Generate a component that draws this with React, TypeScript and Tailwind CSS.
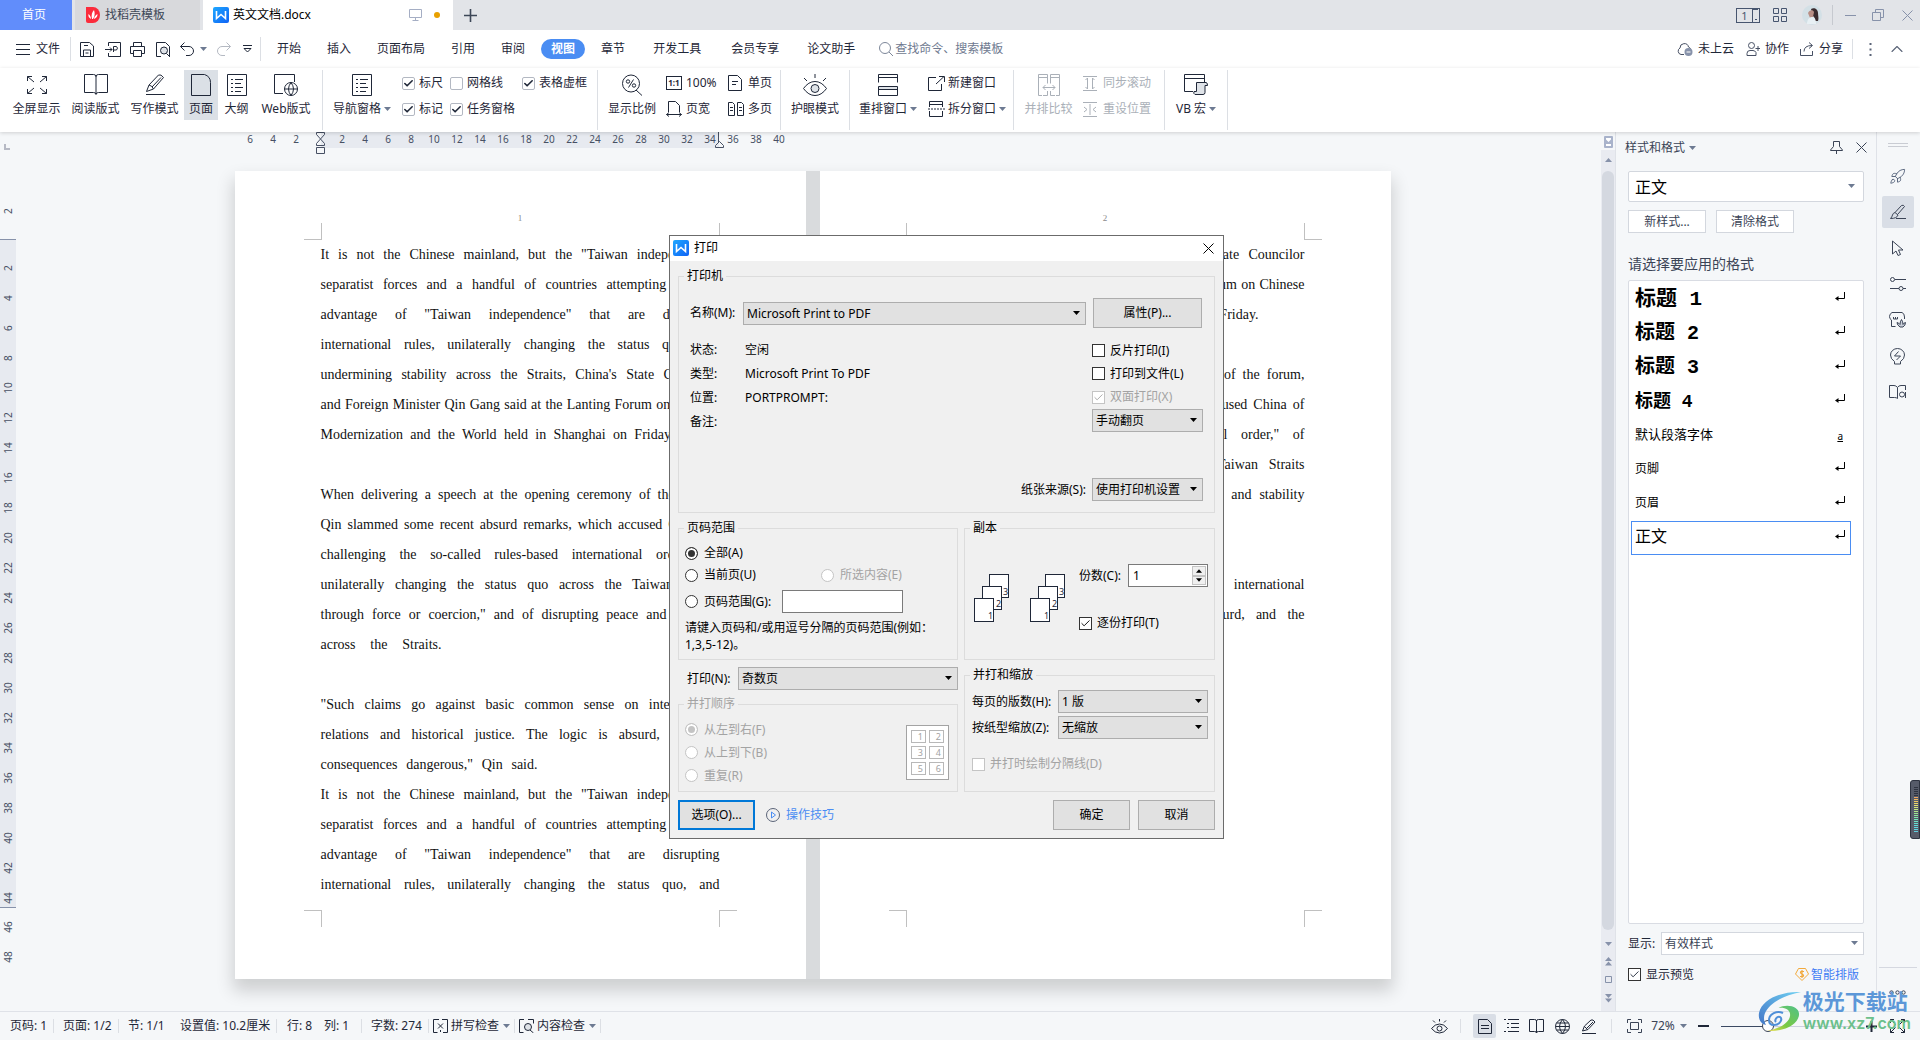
import type { ReactNode } from "react";
import { Check, ChevronUp, Rocket } from "lucide-react";
import clsx from "clsx";

const paragraphLines = [
  { text: 'It is not the Chinese mainland, but the "Taiwan independence"' },
  { text: "separatist forces and a handful of countries attempting to take" },
  { text: 'advantage of "Taiwan independence" that are disrupting' },
  { text: "international rules, unilaterally changing the status quo, and" },
];

const speechLines = [
  { text: "undermining stability across the Straits, China's State Councilor" },
  { text: "and Foreign Minister Qin Gang said at the Lanting Forum on Chinese" },
  { text: "Modernization and the World held in Shanghai on Friday.", width: "w-[353px]" },
  { text: "" },
  { text: "When delivering a speech at the opening ceremony of the forum," },
  { text: "Qin slammed some recent absurd remarks, which accused China of" },
  { text: 'challenging the so-called rules-based international order," of' },
  { text: "unilaterally changing the status quo across the Taiwan Straits" },
  { text: 'through force or coercion," and of disrupting peace and stability' },
  { text: "across the Straits.", width: "w-[121px]" },
  { text: "" },
  { text: '"Such claims go against basic common sense on international' },
  { text: "relations and historical justice. The logic is absurd, and the" },
  { text: 'consequences dangerous," Qin said.', width: "w-[217px]" },
];

const pages = [
  { number: 1, lines: [...paragraphLines, ...speechLines, ...paragraphLines] },
  { number: 2, lines: speechLines },
];

const menuTabs = [
  { label: "开始", className: "px-[10px]" },
  { label: "插入", className: "px-[10px]" },
  { label: "页面布局", className: "px-[10px]" },
  { label: "引用", className: "px-[10px]" },
  { label: "审阅", className: "px-[10px]" },
  { label: "视图", className: "px-[10px] rounded-full bg-[#4a8df3] font-bold text-white" },
  { label: "章节", className: "px-[10px]" },
  { label: "开发工具", className: "px-3" },
  { label: "会员专享", className: "px-3" },
  { label: "论文助手", className: "px-[10px]" },
];

const styleItems = [
  { name: "标题 1", className: "text-[21px] font-bold" },
  { name: "标题 2", className: "text-[20px] font-bold" },
  { name: "标题 3", className: "text-[20px] font-bold" },
  { name: "标题 4", className: "text-[18px] font-bold" },
  { name: "默认段落字体", className: "text-[13px]", character: true },
  { name: "页脚", className: "text-xs" },
  { name: "页眉", className: "text-xs" },
  { name: "正文", className: "text-base", selected: true },
];

const statusItems = [
  { label: "页码: 1", className: "w-[43px]", sep: true },
  { label: "页面: 1/2", className: "ml-[9px] w-[55px]", sep: true },
  { label: "节: 1/1", className: "ml-[9px] w-[52px]" },
  { label: "设置值: 10.2厘米", className: "w-[96px]", sep: true },
  { label: "行: 8", className: "ml-[10px] w-[37px]" },
  { label: "列: 1", className: "w-[37px]", sep: true },
  { label: "字数: 274", className: "ml-[9px] w-[57px]", sep: true },
];

const evens = (from: number, to: number) =>
  Array.from({ length: (to - from) / 2 + 1 }, (_, i) => from + i * 2);

type IconProps = { w: number; h: number; d?: string; className?: string; children?: ReactNode };

const Icon = ({ w, h, d, className, children }: IconProps) => (
  <svg
    width={w}
    height={h}
    viewBox={`0 0 ${w} ${h}`}
    fill="none"
    stroke="currentColor"
    aria-hidden="true"
    className={clsx("shrink-0", className)}
  >
    {d && <path d={d} />}
    {children}
  </svg>
);

const Caret = ({ className = "text-[#6d7a92]" }: { className?: string }) => (
  <svg width="7" height="4" viewBox="0 0 7 4" className={clsx("shrink-0", className)} aria-hidden="true">
    <path d="M0 0h7L3.500 4z" fill="currentColor" />
  </svg>
);

const Sep = ({ className }: { className?: string }) => (
  <span className={clsx("w-px shrink-0 bg-[#dcdfe4]", className)} />
);

const WpsLogo = () => (
  <svg width="16" height="16" viewBox="0 0 16 16" className="shrink-0" aria-hidden="true">
    <defs>
      <linearGradient id="wps" x1="0" y1="0" x2="1" y2="1">
        <stop offset="0" stopColor="#1fa8ff" />
        <stop offset="1" stopColor="#0f62f5" />
      </linearGradient>
    </defs>
    <rect width="16" height="16" rx="2" fill="url(#wps)" />
    <path d="M3.500 4v7.500L8 7.500l4.500 4V4" fill="none" stroke="#fff" strokeWidth="1.600" />
  </svg>
);

type CheckboxProps = {
  label: string;
  checked?: boolean;
  disabled?: boolean;
  soft?: boolean;
  gap?: string;
};

const Checkbox = ({ label, checked, disabled, soft, gap = "gap-[5px]" }: CheckboxProps) => (
  <label className={clsx("flex items-center whitespace-nowrap", gap, disabled && "text-[#a3a3a3]")}>
    <span className="grid size-[13px] shrink-0 place-items-center">
      <input
        type="checkbox"
        defaultChecked={checked}
        disabled={disabled}
        className={clsx(
          "size-[13px] appearance-none border bg-white [grid-area:1/1]",
          soft ? "rounded-[2px] border-[#b3b8c2]" : disabled ? "border-[#c4c4c4]" : "border-[#333]",
        )}
      />
      {checked && (
        <Check size={11} strokeWidth={soft ? 3.5 : 2} className="pointer-events-none [grid-area:1/1]" />
      )}
    </span>
    {label}
  </label>
);

type RadioProps = { name: string; label: string; checked?: boolean; disabled?: boolean };

const Radio = ({ name, label, checked, disabled }: RadioProps) => (
  <label className={clsx("flex items-center gap-[6px] whitespace-nowrap", disabled && "text-[#a3a3a3]")}>
    <input
      type="radio"
      name={name}
      defaultChecked={checked}
      disabled={disabled}
      className="size-[13px] shrink-0 appearance-none rounded-full border border-[#333] bg-white checked:bg-[#333] checked:shadow-[inset_0_0_0_2px_#fff] disabled:border-[#c4c4c4] disabled:checked:bg-[#c4c4c4]"
    />
    {label}
  </label>
);

type SelectProps = { id: string; value: string; className: string; label?: string };

const Select = ({ id, value, className, label }: SelectProps) => (
  <span className={clsx("relative flex h-[23px] shrink-0", className)}>
    <select
      id={id}
      aria-label={label}
      className="w-full appearance-none border border-[#adadad] bg-[#e1e1e1] pl-[3px] leading-[21px] text-black"
    >
      <option>{value}</option>
    </select>
    <Caret className="pointer-events-none absolute top-[9px] right-[6px] text-black" />
  </span>
);

const DialogButton = ({ label, className }: { label: string; className: string }) => (
  <button className={clsx("h-[30px] shrink-0 bg-[#e1e1e1]", className)}>{label}</button>
);

type FieldsetProps = {
  legend: string;
  className?: string;
  bodyClassName?: string;
  disabled?: boolean;
  children: ReactNode;
};

const Fieldset = ({ legend, className, bodyClassName, disabled, children }: FieldsetProps) => (
  <fieldset className={clsx("border border-[#dcdcdc]", className)}>
    <legend className={clsx("ml-[5px] px-[3px] leading-4", disabled && "text-[#a3a3a3]")}>{legend}</legend>
    <div className={bodyClassName}>{children}</div>
  </fieldset>
);

/* ---------- title bar ---------- */

const TitleBar = () => (
  <header className="flex h-[30px] items-stretch bg-[#e2e4e8] text-[#3d4757]">
    <button className="w-[72px] bg-[#618dfb] pr-1 text-white">首页</button>
    <button className="ml-[3px] flex w-[125px] items-center gap-[5px] bg-[#d8d9dc] pl-[11px]">
      <svg width="14" height="16" viewBox="0 0 14 16" aria-hidden="true">
        <path d="M0 0h7a7 8 0 0 1 0 16H2a2 2 0 0 1-2-2z" fill="#fb2c3c" />
        <path
          d="M6 12C5 8 6 5 8 3c1 3 1 6-1 9zM5 12C3 11 2 9 2.500 7 4 8 5 10 5 12zM8 12c0-2 1.500-4 3.500-5 0 3-1.500 4-3.500 5z"
          fill="#fff"
        />
      </svg>
      找稻壳模板
    </button>
    <div className="ml-[3px] flex w-[250px] items-center bg-white pl-[10px] text-black">
      <WpsLogo />
      <span className="ml-1 flex-1">英文文档.docx</span>
      <Icon w={13} h={12} className="text-[#a5aec4]" d="M.5.5h12v8H.5zM6.500 8.500v3M3.500 11.500h6" />
      <span className="mr-[13px] ml-[12px] size-[6px] rounded-full bg-[#e8a000]" />
    </div>
    <button className="ml-[11px]" aria-label="新建标签">
      <Icon w={13} h={13}>
        <path d="M6.500 0v13M0 6.500h13" strokeWidth="1.600" />
      </Icon>
    </button>
    <div className="ml-auto flex items-center pr-[7px] text-[#47556f]">
      <span className="flex h-[15px] w-6 border border-current">
        <span className="flex-1 text-center text-[11px] leading-[13px]">1</span>
        <Icon w={7} h={13} d="M.5 0v13M.5.5H6M3 10.500h2" />
      </span>
      <Icon
        w={14}
        h={14}
        className="ml-[13px]"
        d="M.5.5h5v5h-5zM8.500.5h5v5h-5zM.5 8.500h5v5h-5zM8.500 8.500h5v5h-5z"
      />
      <svg width="20" height="20" viewBox="0 0 20 20" className="ml-[15px]" aria-hidden="true">
        <circle cx="10" cy="10" r="10" fill="#d3e0e6" />
        <path d="M9 4c3-2 7 0 7 4 0 3 1 5 0 8h-3c0-3-1-4-2-5z" fill="#3a2b2e" />
        <path d="M6 8c1-3 5-4 6-1l-1 5-3 1z" fill="#b98f86" />
        <path d="M5 19c0-4 2-7 5-7s4 3 4 7z" fill="#e8f0f4" />
      </svg>
      <Sep className="ml-[10px] h-5 !bg-[#c6c9cf]" />
      <button aria-label="最小化" className="ml-[12px] text-[#8792aa]">
        <Icon w={11} h={12} d="M0 6.500h11" />
      </button>
      <button aria-label="还原" className="ml-[16px] text-[#8792aa]">
        <Icon w={12} h={12} d="M.5 3.500h8v8h-8zM3.500 3V.5h8v8H9" />
      </button>
      <button aria-label="关闭" className="ml-[18px] text-[#8792aa]">
        <Icon w={11} h={11} d="M.5.5l10 10M10.500.5l-10 10" />
      </button>
    </div>
  </header>
);

/* ---------- menu row ---------- */

const MenuRow = () => (
  <nav className="flex h-[38px] items-center bg-white text-[#1f2738]">
    <button className="ml-4 flex items-center gap-[6px]">
      <Icon w={14} h={11} d="M0 .5h14M0 5.500h14M0 10.500h14" />
      文件
    </button>
    <Sep className="ml-[10px] h-6" />
    <button aria-label="保存" className="ml-[9px]">
      <Icon w={15} h={15} d="M.5 14.500V.5h9l4 3.500v10.500zM3.500 14v-6h7v6M4 3.500h4M5.500 11h3" />
    </button>
    <button aria-label="输出为PDF" className="ml-[10px]">
      <Icon w={16} h={15} d="M3.500 4V.5h12v14h-12V11M0 7.500h7M5 5.500l2 2-2 2M8.500 10V4.500h3q2 1.500 0 3.500H9" />
    </button>
    <button aria-label="打印" className="ml-[9px]">
      <Icon w={15} h={15} d="M3.500 4V.5h8V4M3 11.500H.5v-7h14v7H12M3.500 8.500h8v6h-8z" />
    </button>
    <button aria-label="打印预览" className="ml-[11px]">
      <Icon w={15} h={15} d="M5 14.500H.5V.5h9l4 4V14">
        <circle cx="8" cy="8.500" r="3.500" fill="#dfe3e8" />
        <path d="M10.500 11.500l3.500 3.500" />
      </Icon>
    </button>
    <button aria-label="撤销" className="ml-[9px] flex items-center gap-[6px]">
      <Icon w={14} h={14} d="M4.500.5l-4 4 4 4M.5 4.500H9a4.500 4.500 0 0 1 0 9H6" />
      <Caret />
    </button>
    <button aria-label="恢复" className="ml-[10px] text-[#b4b9c2]">
      <Icon w={14} h={14} d="M9.500.5l4 4-4 4M13.500 4.500H5a4.500 4.500 0 0 0 0 9h3" />
    </button>
    <button aria-label="自定义快速访问工具栏" className="ml-[12px]">
      <Icon w={9} h={8} d="M0 .5h9M1 3.500h7l-3.500 3.500z" />
    </button>
    <Sep className="ml-[8px] h-6" />
    <div className="ml-[6px] flex gap-[6px]">
      {menuTabs.map((tab) => (
        <button key={tab.label} className={clsx("h-5 whitespace-nowrap", tab.className)}>
          {tab.label}
        </button>
      ))}
    </div>
    <label className="ml-[14px] flex items-center gap-[1px] text-[#7d8799]">
      <Icon w={15} h={14}>
        <circle cx="6" cy="6" r="5.500" />
        <path d="M10 10l4 4" />
      </Icon>
      <input
        aria-label="查找命令"
        placeholder="查找命令、搜索模板"
        className="w-[130px] placeholder:text-[#6f7a90]"
      />
    </label>
    <div className="ml-auto flex items-center pr-[13px] whitespace-nowrap">
      <button className="flex items-center gap-[5px]">
        <Icon
          w={16}
          h={14}
          d="M7 12.500H4A3.500 3.500 0 0 1 3 6a4.300 4.300 0 0 1 8.500-1Q13 5.500 13.500 7"
          className="text-[#475064]"
        >
          <circle cx="11.500" cy="10" r="4" fill="#8792aa" stroke="none" />
          <path d="M9.500 10h4" stroke="#fff" />
        </Icon>
        未上云
      </button>
      <button className="ml-[12px] flex items-center gap-[5px]">
        <Icon
          w={14}
          h={14}
          d="M1 13.500v-2q0-3 3-3h3q2 0 3 2v3zM9.500 6.500h5M12 4v5"
          className="text-[#475064]"
        >
          <circle cx="5.500" cy="3.500" r="3" />
        </Icon>
        协作
      </button>
      <button className="ml-[11px] flex items-center gap-[5px]">
        <Icon
          w={14}
          h={14}
          d="M.5 7v6.500h12V9M4 9.500q0-6 8-6M9 .5l3.500 3-3.500 3"
          className="text-[#475064]"
        />
        分享
      </button>
      <Sep className="ml-[9px] h-5" />
      <button aria-label="更多" className="ml-[16px]">
        <Icon w={3} h={13} className="text-[#5b6478]">
          <path d="M1.500 0v2M1.500 5.500v2M1.500 11v2" strokeWidth="2" />
        </Icon>
      </button>
      <button aria-label="折叠功能区" className="ml-[15px] text-[#5b6478]">
        <ChevronUp size={20} strokeWidth={1.3} />
      </button>
    </div>
  </nav>
);

/* ---------- ribbon ---------- */

type ToolProps = {
  icon: ReactNode;
  label: string;
  className?: string;
  caret?: boolean;
  disabled?: boolean;
};

const LargeTool = ({ icon, label, className, caret, disabled }: ToolProps) => (
  <button
    disabled={disabled}
    className={clsx("flex h-[50px] shrink-0 flex-col items-center disabled:text-[#aab0b8]", className)}
  >
    <span className="flex h-[30px] items-center">{icon}</span>
    <span className="flex items-center gap-[3px] leading-[18px] whitespace-nowrap">
      {label}
      {caret && <Caret />}
    </span>
  </button>
);

const SmallTool = ({ icon, label, caret, disabled }: ToolProps) => (
  <button
    disabled={disabled}
    className="flex h-[26px] items-center gap-[3px] whitespace-nowrap disabled:text-[#aab0b8]"
  >
    <span className="flex w-[17px] shrink-0">{icon}</span>
    {label}
    {caret && <Caret />}
  </button>
);

const outlineIcon = (
  <Icon
    w={20}
    h={22}
    d="M.5.500h19v21H.5zM4 5.500h2M8 5.500h8M4 9.500h2M8 9.500h6M4 13.500h2M8 13.500h8M4 17.500h2M8 17.500h6"
  />
);

const Ribbon = () => (
  <section className="relative z-10 flex h-16 items-start bg-white pt-[2px] pl-[7px] text-[#1f2738] shadow-[0_1px_4px_rgba(0,0,0,0.16)]">
    <LargeTool
      label="全屏显示"
      className="w-[59px]"
      icon={
        <Icon
          w={22}
          h={20}
          d="M8 7 1.500 1.500M1.500 6V1.500H6M14 7l6.500-5.500M16 1.500h4.500V6M8 13l-6.500 5.500M1.500 14v4.500H6M14 13l6.500 5.500M16 18.500h4.500V14"
        />
      }
    />
    <LargeTool
      label="阅读版式"
      className="w-[59px]"
      icon={
        <Icon
          w={24}
          h={22}
          d="M.5.500h9q2.500 0 2.500 2 0-2 2.500-2h9v18h-9q-2.500 0-2.500 2 0-2-2.500-2h-9zM12 2v18"
        />
      }
    />
    <LargeTool
      label="写作模式"
      className="w-[59px]"
      icon={
        <Icon
          w={22}
          h={22}
          d="M2 20.500h19M2.500 17.500 5 11 14.500 1q2.500-1 5 2.500L9.500 15zM5 11q3 .5 4.500 4M8 13 17 3.500"
        />
      }
    />
    <LargeTool
      label="页面"
      className="w-[34px] bg-[#dbe0e6]"
      icon={<Icon w={20} h={22} d="M.5.500h13q6 2 6 8v13H.5z" />}
    />
    <LargeTool label="大纲" className="w-[37px]" icon={outlineIcon} />
    <LargeTool
      label="Web版式"
      className="w-[62px]"
      icon={
        <Icon w={24} h={22} d="M9 19.500H.5v-19h20V8">
          <circle cx="17" cy="15" r="6.500" />
          <path d="M10.500 15h13M17 8.500q-5 6.500 0 13 5-6.500 0-13" />
        </Icon>
      }
    />
    <Sep className="ml-[5px] h-[60px]" />
    <LargeTool label="导航窗格" caret className="ml-2 w-[62px]" icon={outlineIcon} />
    <div className="ml-[9px] grid shrink-0 auto-rows-[26px] grid-cols-[48px_72px_75px]">
      <Checkbox soft gap="gap-1" label="标尺" checked />
      <Checkbox soft gap="gap-1" label="网格线" />
      <Checkbox soft gap="gap-1" label="表格虚框" checked />
      <Checkbox soft gap="gap-1" label="标记" checked />
      <Checkbox soft gap="gap-1" label="任务窗格" checked />
    </div>
    <Sep className="h-[60px]" />
    <LargeTool
      label="显示比例"
      className="w-[68px]"
      icon={
        <Icon w={22} h={22} d="M15 16l6 5.500M12.500 5.500l-5 8">
          <circle cx="10" cy="9.500" r="8.500" />
          <circle cx="7" cy="7.500" r="1.700" />
          <circle cx="13" cy="11.500" r="1.700" />
        </Icon>
      }
    />
    <div className="grid shrink-0 grid-cols-[62px_52px] grid-rows-2">
      <SmallTool
        label="100%"
        icon={
          <span className="h-[14px] w-4 border border-current text-center text-[8px] leading-3 font-bold">
            1:1
          </span>
        }
      />
      <SmallTool label="单页" icon={<Icon w={14} h={16} d="M.5.500h9l4 4v11H.5zM4 6.500h6M4 9.500h4" />} />
      <SmallTool
        label="页宽"
        icon={
          <Icon
            w={16}
            h={16}
            d="M2.500 11V.5h7l4 4V11M.5 13.500h15M3 11.500l-2.500 2 2.500 2M13 11.500l2.500 2-2.500 2"
          />
        }
      />
      <SmallTool
        label="多页"
        icon={
          <Icon
            w={16}
            h={16}
            d="M.5 1.500h4l2 2v11h-6zM9.500 1.500h4l2 2v11h-6zM2 6.500h3M2 9.500h3M11 6.500h3M11 9.500h3"
          />
        }
      />
    </div>
    <Sep className="h-[60px]" />
    <LargeTool
      label="护眼模式"
      className="w-[68px]"
      icon={
        <Icon w={24} h={22} d="M.5 14.500q5-7 11.500-7t11.500 7q-5 7-11.500 7t-11.500-7M12 0v4M1 4l3 3M23 4l-3 3">
          <circle cx="12" cy="14.500" r="4" fill="#dfe3e8" />
        </Icon>
      }
    />
    <Sep className="h-[60px]" />
    <LargeTool
      label="重排窗口"
      caret
      className="w-[76px]"
      icon={
        <Icon w={20} h={22}>
          <path d="M.5 12.500h19v3H.5z" fill="#dfe3e8" stroke="none" />
          <path d="M.5 8.500v-8h19v8M0 3.500h20M.5 12.500h19v9H.5zM0 15.500h20" />
        </Icon>
      }
    />
    <div className="ml-[2px] flex w-[86px] shrink-0 flex-col">
      <SmallTool
        label="新建窗口"
        icon={<Icon w={17} h={15} d="M8 1.500H.5v13h13V8M8 8l8-7.500M11 .5h5.500V6" />}
      />
      <SmallTool
        label="拆分窗口"
        caret
        icon={
          <Icon w={17} h={16} d="M1.500 6V.5h13V6M1 3.500h14M1.500 10v5.500h13V10">
            <path d="M0 8h17" strokeDasharray="2 1" />
          </Icon>
        }
      />
    </div>
    <Sep className="-ml-px h-[60px]" />
    <LargeTool
      label="并排比较"
      disabled
      className="w-[69px]"
      icon={
        <Icon
          w={22}
          h={22}
          d="M4 21.500H.5V.5h9v9M18 21.500h3.500V.5h-9v9M.5 3.500h9M12.500 3.500h9M9.500 17v4.500H5M12.500 17v4.500H17M5 13.500h12M7.500 11 5 13.500 7.500 16M14.500 11l2.500 2.500-2.500 2.500"
        />
      }
    />
    <div className="flex w-[81px] shrink-0 flex-col">
      <SmallTool
        label="同步滚动"
        disabled
        icon={
          <Icon
            w={14}
            h={15}
            d="M0 .5h14M0 14.500h14M4.500 2v11M9.500 2v11M2.500 4l2-2M2.500 11l2 2M11.500 4l-2-2M11.500 11l-2 2"
          />
        }
      />
      <SmallTool
        label="重设位置"
        disabled
        icon={<Icon w={14} h={15} d="M0 .5h14M0 14.500h14M7 2v11M1 5l3 2.500L1 10M13 5l-3 2.500L13 10" />}
      />
    </div>
    <Sep className="h-[60px]" />
    <LargeTool
      label="VB 宏"
      caret
      className="w-[62px]"
      icon={
        <Icon w={24} h={22} d="M9 17.500H.5V.5h20V8M.5 4.500h20">
          <path d="M12.500 8.500H22q1.500 0 1.500 3H21v7q0 2-2 2h-8q-2-1-1-3h2.500z" fill="#dfe3e8" />
        </Icon>
      }
    />
    <Sep className="h-[60px]" />
  </section>
);

/* ---------- document ---------- */

const HorizontalRuler = () => {
  const cell = "w-[23px] shrink-0 text-center";
  return (
    <div className="relative flex h-4 text-[10px] leading-[14px] text-[#475064]">
      <div className="flex w-[86px] pl-1">
        {[6, 4, 2].map((n) => (
          <span key={n} className={cell}>{n}</span>
        ))}
      </div>
      <div className="flex w-[398px] bg-[#e7eaf0] pl-[10px]">
        {evens(2, 34).map((n) => (
          <span key={n} className={cell}>{n}</span>
        ))}
      </div>
      <div className="flex pl-[3px]">
        {evens(36, 40).map((n) => (
          <span key={n} className={cell}>{n}</span>
        ))}
      </div>
      <Icon
        w={9}
        h={22}
        className="absolute top-0 left-[81px]"
        d="M.5.5h8v2L4.500 7l-4-4.500zM4.500 7l4 4.500v2h-8v-2zM.5 15.500h8v6h-8z"
      />
      <Icon w={9} h={16} className="absolute top-0 left-[480px]" d="M3.500 0v10M4.500 9.500l4 4v2h-8v-2z" />
    </div>
  );
};

const VerticalRuler = () => {
  const cell = "flex h-[30px] shrink-0 -rotate-90 items-center justify-center";
  return (
    <div className="w-4 shrink-0 text-[10px] text-[#475064]">
      <Icon w={16} h={64} className="text-[#b6b9c4]">
        <path d="M5 12v5h5" strokeWidth="2" />
      </Icon>
      <div className={cell}>2</div>
      <div className="mt-[13px] h-[669px] border-y border-[#8792aa] bg-[#e7eaf0] pt-[13px]">
        {evens(2, 44).map((n) => (
          <div key={n} className={cell}>{n}</div>
        ))}
      </div>
      <div className="pt-1">
        <div className={cell}>46</div>
        <div className={cell}>48</div>
      </div>
    </div>
  );
};

type Line = { text: string; width?: string };

const Page = ({ number, lines }: { number: number; lines: Line[] }) => (
  <article className="w-[571px] bg-white font-['Liberation_Serif',serif] text-sm text-[#111]">
    <div className="flex h-[52px] items-end justify-center text-[9px] leading-none text-[#8a8a8a]">
      {number}
    </div>
    <div className="flex h-[17px] justify-between px-[69px]">
      <span className="w-[18px] border-r border-b border-[#c0c0c0]" />
      <span className="w-[18px] border-b border-l border-[#c0c0c0]" />
    </div>
    <div className="min-h-[670px] px-[86px]">
      {lines.map((line, index) => (
        <p
          key={index}
          className={clsx("h-[30px] leading-[30px] whitespace-nowrap [text-align-last:justify]", line.width)}
        >
          {line.text}
        </p>
      ))}
    </div>
    <div className="flex h-[17px] justify-between px-[69px]">
      <span className="w-[18px] border-t border-r border-[#c0c0c0]" />
      <span className="w-[18px] border-t border-l border-[#c0c0c0]" />
    </div>
    <div className="h-[52px]" />
  </article>
);

const ScrollColumn = () => (
  <div className="flex w-[14px] shrink-0 flex-col items-center bg-[#e9ebf1] text-[#8792aa]">
    <div className="flex h-[18px] w-full items-end justify-center bg-[#f5f7f9]">
      <svg width="9" height="14" viewBox="0 0 9 14" aria-hidden="true">
        <rect width="9" height="12" rx="1" fill="#a9b3cb" />
        <path d="M2 2h5v1.500L4.500 6 2 3.500zM2 10V8h5v2z" fill="#fff" />
      </svg>
    </div>
    <Caret className="mt-2 rotate-180 text-[#8792aa]" />
    <div className="mt-[9px] w-3 flex-1 rounded-full bg-[#d4d8e0]" />
    <Caret className="mt-3 text-[#8792aa]" />
    <Icon w={7} h={9} className="mt-[11px]">
      <path d="M0 4 3.500 0 7 4zM0 8.500l3.500-4 3.500 4z" fill="currentColor" stroke="none" />
    </Icon>
    <Icon w={7} h={7} className="mt-[10px]" d="M.5.5h6v6h-6z" />
    <Icon w={7} h={9} className="mt-[11px] mb-2">
      <path d="M0 0h7L3.500 4zM0 4.500h7l-3.500 4z" fill="currentColor" stroke="none" />
    </Icon>
  </div>
);

/* ---------- style pane ---------- */

const StylePane = () => (
  <aside className="flex w-[261px] shrink-0 flex-col border-l border-[#dfe2e8] pr-[12px] pb-[30px] pl-3 text-[#3b4456]">
    <div className="-mx-[3px] flex h-[31px] items-center">
      <button className="flex items-center gap-1">
        样式和格式 <Caret />
      </button>
      <button aria-label="固定" className="ml-auto">
        <Icon w={13} h={13} d="M3.500.5h6v5l3 3.500v.5H.5V9l3-3.500zM6.500 9.500V13" />
      </button>
      <button aria-label="关闭窗格" className="ml-[13px]">
        <Icon w={11} h={11} d="M.5.5l10 10M10.500.5l-10 10" />
      </button>
    </div>
    <span className="relative mt-2 flex h-[31px]">
      <select
        aria-label="当前样式"
        className="w-full appearance-none rounded-[2px] border border-[#d3d7de] bg-white pl-[6px] text-base text-black"
      >
        <option>正文</option>
      </select>
      <Caret className="pointer-events-none absolute top-[13px] right-[9px] text-[#6d7a92]" />
    </span>
    <div className="mt-2 flex gap-[10px]">
      <button className="h-[23px] w-[78px] border border-[#d3d7de] bg-white">新样式...</button>
      <button className="h-[23px] w-[78px] border border-[#d3d7de] bg-white">清除格式</button>
    </div>
    <h2 className="mt-[21px] text-sm leading-5">请选择要应用的格式</h2>
    <ul className="mt-[6px] flex-1 rounded-[2px] border border-[#d9dce3] bg-white pt-[2px] font-['Liberation_Mono','Noto_Sans_CJK_SC',monospace] text-black">
      {styleItems.map((item) => (
        <li
          key={item.name}
          className={clsx(
            "mr-3 ml-[2px] flex h-[34px] items-center justify-between border pr-[5px] pl-[3px]",
            item.selected ? "border-[#4a8df3]" : "border-transparent",
          )}
        >
          <span className={clsx("leading-8", item.className)}>{item.name}</span>
          {item.character ? (
            <span className="pr-[2px] font-['Noto_Sans',sans-serif] text-[10px] underline">a</span>
          ) : (
            <Icon w={10} h={9} className="mb-[7px]" d="M9.500 0v6.500H1">
              <path d="M0 6.500 3.500 4v5z" fill="currentColor" stroke="none" />
            </Icon>
          )}
        </li>
      ))}
    </ul>
    <div className="mt-2 flex items-center">
      <label htmlFor="style-filter" className="w-[33px] text-[#1f2738]">显示:</label>
      <span className="relative flex h-[23px] flex-1">
        <select
          id="style-filter"
          className="w-full appearance-none border border-[#d3d7de] bg-white pl-[3px]"
        >
          <option>有效样式</option>
        </select>
        <Caret className="pointer-events-none absolute top-[9px] right-[6px] text-[#6d7a92]" />
      </span>
    </div>
    <div className="mt-[13px] flex h-[13px] items-center justify-between pr-[5px] text-[#1f2738]">
      <Checkbox label="显示预览" checked />
      <a href="#layout" className="flex items-center gap-[2px] text-[#3f7cf4]">
        <Icon w={14} h={13} d="M3.500.5h7l3 5.500L7 12.500.5 6z" className="text-[#f2a93b]">
          <path d="M9 3.500H6q-1.500 1.500 1 2.500t1 2.500H5M7 2v8" strokeWidth="1.200" />
        </Icon>
        智能排版
      </a>
    </div>
  </aside>
);

const ToolStrip = () => (
  <aside className="flex w-[44px] shrink-0 flex-col items-center border-l border-[#dfe2e8] pr-[2px] text-[#3b4456]">
    <span className="mt-[11px] h-1 w-5 border-y border-[#c9ccd3]" />
    <button aria-label="推荐" className="mt-[13px] flex h-8 w-8 items-center justify-center">
      <Rocket size={17} strokeWidth={1.4} className="text-[#5b6880]" />
    </button>
    <button
      aria-label="样式"
      className="mt-1 flex h-8 w-8 items-center justify-center rounded-[2px] bg-[#d9dee6]"
    >
      <Icon
        w={16}
        h={16}
        d="M6 14.500h10M5 8.500 11.500 1.500q2-1 3 1L8 10M5 8.500l3 2.500q-1 3.500-7.500 3.500Q2 13 2.500 11T5 8.500"
      />
    </button>
    <button aria-label="选择" className="mt-1 flex h-8 w-8 items-center justify-center">
      <Icon w={13} h={17} d="M1.500 1v13l3.500-3 2 4.500 2.500-1-2-4.500H12z" />
    </button>
    <button aria-label="属性" className="mt-1 flex h-8 w-8 items-center justify-center">
      <Icon w={16} h={14} d="M5 2.500h11M0 11.500h9M13 11.500h3">
        <circle cx="2.500" cy="2.500" r="2" />
        <circle cx="11" cy="11.500" r="2" />
      </Icon>
    </button>
    <button aria-label="素材" className="mt-1 flex h-8 w-8 items-center justify-center">
      <Icon w={17} h={16} d="M6.500 14.500h-4V8Q.5 7 .5 4.500T3 .5h10Q15.500 1.500 15.500 5v2M4.500 5v2h2V5M6.500 7h2V5">
        <path
          d="M11 15q-3-2-3-4.500 2 .5 3 2 0-3 1.500-5 1.500 2 1.500 5 .5-1.500 2.500-2 0 3-2.500 4.500z"
          fill="#c9cfda"
        />
      </Icon>
    </button>
    <button aria-label="助手" className="mt-1 flex h-8 w-8 items-center justify-center">
      <Icon w={15} h={17} d="M4.500 13.500Q.5 11 .5 7a7 6.500 0 0 1 14 0q0 4-4 6.500V16h-6zM8.500 3.500l-4 4.500h6l-4 4" />
    </button>
    <button aria-label="查找" className="mt-1 flex h-8 w-8 items-center justify-center">
      <Icon w={17} h={14} d="M8.500 2.500Q7 .5 5 .5H.5v12h5q2 0 3 1zM8.500 2.500Q9.500.5 12 .5h4.500V5M16.500 7v6">
        <circle cx="13" cy="9.500" r="2.500" />
      </Icon>
    </button>
    <span className="mt-auto h-px w-[38px] bg-[#d5d8e0]" />
    <button aria-label="更多工具" className="mt-[22px] mb-4">
      <Icon w={17} h={5}>
        <circle cx="2.500" cy="2.500" r="1.700" />
        <circle cx="8.500" cy="2.500" r="1.700" />
        <circle cx="14.500" cy="2.500" r="1.700" />
      </Icon>
    </button>
  </aside>
);

/* ---------- print dialog ---------- */

const CopiesIcon = () => (
  <Icon w={37} h={49} className="text-[#1f2738]">
    {[
      { n: 3, x: 15, y: 0 },
      { n: 2, x: 8, y: 12 },
      { n: 1, x: 0, y: 24 },
    ].map((sheet) => (
      <g key={sheet.n}>
        <rect x={sheet.x + 0.5} y={sheet.y + 0.5} width="19" height="23" fill="#fff" />
        <text x={sheet.x + 14} y={sheet.y + 21} fontSize="9" fill="currentColor" stroke="none">
          {sheet.n}
        </text>
      </g>
    ))}
  </Icon>
);

const PrintDialog = () => (
  <div
    role="dialog"
    aria-label="打印"
    className="absolute top-[103px] left-[669px] z-20 w-[555px] border border-[#6b6b6b] bg-[#f0f0f0] text-black"
  >
    <div className="flex h-[25px] items-center bg-white pr-[9px] pb-px pl-[3px]">
      <WpsLogo />
      <span className="ml-[5px]">打印</span>
      <button aria-label="关闭" className="ml-auto">
        <Icon w={11} h={11} d="M.5.5l10 10M10.500.5l-10 10" />
      </button>
    </div>
    <div className="px-2 pt-[7px] pb-2">
      <Fieldset legend="打印机" bodyClassName="pr-[11px] pb-[11px]">
        <div className="flex items-center pt-[14px] pl-[11px]">
          <label htmlFor="printer" className="w-[53px]">名称(M):</label>
          <Select id="printer" value="Microsoft Print to PDF" className="w-[343px]" />
          <DialogButton label="属性(P)..." className="ml-[7px] w-[109px] border border-[#adadad]" />
        </div>
        <div className="mt-[10px] flex justify-between pl-[11px]">
          <dl className="grid auto-rows-[24px] grid-cols-[55px_auto] leading-6">
            <dt>状态:</dt>
            <dd>空闲</dd>
            <dt>类型:</dt>
            <dd>Microsoft Print To PDF</dd>
            <dt>位置:</dt>
            <dd>PORTPROMPT:</dd>
            <dt>备注:</dt>
            <dd />
          </dl>
          <div className="grid w-[111px] grid-rows-[23px_23px_24px_23px] pt-px">
            <Checkbox label="反片打印(I)" />
            <Checkbox label="打印到文件(L)" />
            <Checkbox label="双面打印(X)" checked disabled />
            <Select id="duplex" label="翻页方式" value="手动翻页" className="w-[111px]" />
          </div>
        </div>
        <div className="mt-[44px] flex items-center justify-end gap-[6px]">
          <label htmlFor="paper-source">纸张来源(S):</label>
          <Select id="paper-source" value="使用打印机设置" className="w-[111px]" />
        </div>
      </Fieldset>

      <div className="mt-[7px] grid grid-cols-[280px_1fr] gap-x-[6px]">
        <div>
          <Fieldset legend="页码范围" bodyClassName="px-[6px] pt-[6px] pb-[6px]">
            <div className="flex h-[22px] items-center">
              <Radio name="range" label="全部(A)" checked />
            </div>
            <div className="grid h-[22px] grid-cols-[136px_auto] items-center justify-start">
              <Radio name="range" label="当前页(U)" />
              <Radio name="range" label="所选内容(E)" disabled />
            </div>
            <div className="mt-1 grid h-[23px] grid-cols-[97px_121px] items-center">
              <Radio name="range" label="页码范围(G):" />
              <input aria-label="页码范围" className="h-[23px] border border-[#7a7a7a] bg-white px-1" />
            </div>
            <p className="mt-[6px] leading-[17px]">
              请键入页码和/或用逗号分隔的页码范围(例如：
              <br />
              1,3,5-12)。
            </p>
          </Fieldset>
          <div className="mt-[7px] flex items-center pl-[9px]">
            <label htmlFor="print-what" className="w-[51px]">打印(N):</label>
            <Select id="print-what" value="奇数页" className="w-[220px]" />
          </div>
          <Fieldset
            legend="并打顺序"
            disabled
            className="mt-[6px]"
            bodyClassName="flex items-center justify-between pt-[6px] pr-2 pb-1 pl-[6px]"
          >
            <div className="grid auto-rows-[23px]">
              <Radio name="order" label="从左到右(F)" checked disabled />
              <Radio name="order" label="从上到下(B)" disabled />
              <Radio name="order" label="重复(R)" disabled />
            </div>
            <div className="grid h-[55px] w-[43px] grid-cols-2 grid-rows-3 gap-[3px] border border-[#a3a3a3] bg-white p-1 text-[9px] leading-[11px] text-[#a3a3a3]">
              {[1, 2, 3, 4, 5, 6].map((n) => (
                <span key={n} className="border border-[#b8b8b8] pr-[2px] text-right">{n}</span>
              ))}
            </div>
          </Fieldset>
        </div>

        <div>
          <Fieldset legend="副本" bodyClassName="flex pb-[27px] pl-[9px]">
            <div className="flex gap-[19px] pt-[38px]">
              <CopiesIcon />
              <CopiesIcon />
            </div>
            <div className="ml-3 pt-[28px]">
              <div className="flex items-center">
                <label htmlFor="copies" className="w-[49px]">份数(C):</label>
                <div className="flex h-[23px] w-20 border border-[#7a7a7a] bg-white p-px">
                  <input id="copies" defaultValue="1" className="w-0 flex-1 pl-[3px]" />
                  <div className="flex w-[14px] flex-col">
                    <button
                      aria-label="增加"
                      className="flex flex-1 items-center justify-center border border-[#c4c4c4] bg-[#f0f0f0]"
                    >
                      <Caret className="w-[6px] rotate-180 text-black" />
                    </button>
                    <button
                      aria-label="减少"
                      className="flex flex-1 items-center justify-center border border-[#c4c4c4] bg-[#f0f0f0]"
                    >
                      <Caret className="w-[6px] text-black" />
                    </button>
                  </div>
                </div>
              </div>
              <div className="mt-[27px] flex h-[18px] items-center">
                <Checkbox label="逐份打印(T)" checked />
              </div>
            </div>
          </Fieldset>
          <Fieldset legend="并打和缩放" className="mt-[7px]" bodyClassName="pt-[7px] pr-[6px] pb-[18px] pl-[7px]">
            <div className="grid auto-rows-[23px] grid-cols-[86px_150px] items-center gap-y-[3px]">
              <label htmlFor="per-sheet">每页的版数(H):</label>
              <Select id="per-sheet" value="1 版" className="w-[150px]" />
              <label htmlFor="scale">按纸型缩放(Z):</label>
              <Select id="scale" value="无缩放" className="w-[150px]" />
            </div>
            <div className="mt-4 flex h-[18px] items-center">
              <Checkbox label="并打时绘制分隔线(D)" disabled />
            </div>
          </Fieldset>
        </div>
      </div>

      <div className="mt-2 flex items-center">
        <DialogButton label="选项(O)..." className="w-[77px] border-2 border-[#0078d7]" />
        <a href="#tips" className="ml-[11px] flex items-center gap-[6px] text-[#4a8df3]">
          <Icon w={14} h={14}>
            <circle cx="7" cy="7" r="6.500" stroke="#5b6478" />
            <path d="M5.500 4v6l4-3z" />
          </Icon>
          操作技巧
        </a>
        <DialogButton label="确定" className="ml-auto w-[77px] border border-[#adadad]" />
        <DialogButton label="取消" className="ml-2 w-[77px] border border-[#adadad]" />
      </div>
    </div>
  </div>
);

/* ---------- status bar ---------- */

const StatusBar = () => (
  <footer className="flex h-[29px] items-center border-t border-[#dfe2e8] bg-[#f5f7f9] text-[#1f2738]">
    <div className="flex items-center pl-[10px] whitespace-nowrap">
      {statusItems.map((item) => (
        <span key={item.label} className="flex items-center">
          <span className={item.className}>{item.label}</span>
          {item.sep && <Sep className="h-[14px]" />}
        </span>
      ))}
      <button className="ml-1 flex items-center gap-[3px]">
        <Icon w={15} h={14} d="M6 .5H.5v13h4M9 .5h5.500v13H10M5 4.500l5 5M10 4.500l-5 5M7.500 11v2" />
        拼写检查
        <Caret className="ml-px text-[#6d7a92]" />
      </button>
      <Sep className="ml-1 h-[14px]" />
      <button className="ml-1 flex items-center gap-[3px]">
        <Icon w={15} h={14} d="M5 .5H.5v13h4M9 .5h5.500v4M11 11l3.500 3">
          <circle cx="9" cy="8" r="3.500" fill="#dfe3e8" />
        </Icon>
        内容检查
        <Caret className="ml-px text-[#6d7a92]" />
      </button>
      <Sep className="ml-1 h-[14px]" />
    </div>
    <div className="ml-auto flex items-center pr-[15px]">
      <button aria-label="护眼模式">
        <Icon
          w={17}
          h={15}
          d="M.5 9.500q3.500-4.500 8-4.500t8 4.500q-3.500 4.500-8 4.500t-8-4.500M8.500 0v2.500M2 1.500l2 2M15 1.500l-2 2"
        >
          <circle cx="8.500" cy="9.500" r="2.500" />
        </Icon>
      </button>
      <Sep className="ml-[12px] h-[14px]" />
      <button
        aria-label="页面视图"
        className="ml-[12px] flex h-6 w-[23px] items-center justify-center rounded-[2px] bg-[#d9dee6]"
      >
        <Icon w={14} h={15} d="M.5.500h9l4 4v10H.5zM3 6.500h8M3 9.500h8" />
      </button>
      <button aria-label="大纲视图" className="ml-2">
        <Icon w={15} h={14} d="M0 .5h2M4 .5h11M3 4.500h2M7 4.500h8M3 8.500h2M7 8.500h8M0 12.500h2M4 12.500h11" />
      </button>
      <button aria-label="阅读视图" className="ml-[10px]">
        <Icon
          w={15}
          h={15}
          d="M.5.500h5q2 0 2 1.500 0-1.500 2-1.500h5v12h-5q-2 0-2 1.500 0-1.500-2-1.500h-5zM7.500 2v12"
        />
      </button>
      <button aria-label="Web视图" className="ml-[11px]">
        <Icon w={15} h={15} d="M.5 7.500h14M1.500 4h12M1.500 11h12M7.500.5q-6 7 0 14 6-7 0-14">
          <circle cx="7.500" cy="7.500" r="7" />
        </Icon>
      </button>
      <button aria-label="写作视图" className="ml-[11px]">
        <Icon w={16} h={15} d="M1 14.500h14M1.500 12l2-5L10 1q2-1 4 2L7 10.500zM3.500 7.500l3 3M6 9l6-6" />
      </button>
      <Sep className="ml-[14px] h-[14px]" />
      <button aria-label="适应窗口" className="ml-[15px] text-[#3b4456]">
        <Icon w={15} h={14} d="M.5 4V.5H4M11 .5h3.500V4M14.500 10v3.500H11M4 13.500H.5V10M3.500 3.500h8v7h-8z" />
      </button>
      <button className="ml-2 flex items-center gap-1 text-[#3b4456]">
        <span className="w-[26px]">72%</span>
        <Caret />
      </button>
      <button aria-label="缩小" className="ml-[11px]">
        <Icon w={11} h={12}>
          <path d="M0 6h11" strokeWidth="2" />
        </Icon>
      </button>
      <input
        type="range"
        aria-label="缩放"
        min={0}
        max={100}
        defaultValue={33}
        className="ml-3 h-px w-[137px] appearance-none bg-[linear-gradient(to_right,#3b4a63_36%,#cdd0de_36%)] [&::-webkit-slider-thumb]:size-3 [&::-webkit-slider-thumb]:appearance-none [&::-webkit-slider-thumb]:rounded-full [&::-webkit-slider-thumb]:border [&::-webkit-slider-thumb]:border-[#3b4456] [&::-webkit-slider-thumb]:bg-white"
      />
      <button aria-label="放大" className="ml-[8px]">
        <Icon w={11} h={11}>
          <path d="M5.500 0v11M0 5.500h11" strokeWidth="2" />
        </Icon>
      </button>
      <button aria-label="全屏" className="ml-[13px]">
        <Icon
          w={15}
          h={14}
          d="M5.500 5.500.5.500M.5 4V.5H4M9.500 5.500l5-5M11 .5h3.500V4M5.500 8.500l-5 5M.5 10v3.500H4M9.500 8.500l5 5M11 13.500h3.500V10"
        />
      </button>
    </div>
  </footer>
);

const MeterBadge = () => (
  <div className="absolute top-[780px] right-0 z-20 flex h-[59px] w-[10px] flex-col gap-px rounded-l-[3px] border border-[#2e3340] bg-[#565b69] pt-[6px] pl-[3px]">
    {[
      "bg-[#2e3340]", "bg-[#2e3340]", "bg-[#2e3340]", "bg-[#2e3340]", "bg-[#2e3340]",
      "bg-[#f0a860]", "bg-[#f0b860]", "bg-[#f0c860]", "bg-[#ecd868]", "bg-[#e4e070]",
      "bg-[#d4e478]", "bg-[#c4e880]", "bg-[#b0e888]", "bg-[#9ce890]", "bg-[#8ce89c]",
      "bg-[#80e8ac]", "bg-[#74e8b8]", "bg-[#6ce4c4]", "bg-[#64e0d0]", "bg-[#60dcdc]",
      "bg-[#60d8e0]", "bg-[#60d4e0]", "bg-[#60d0e0]",
    ].map((color, index) => (
      <span key={index} className={clsx("h-px w-1", color)} />
    ))}
  </div>
);

const Watermark = () => (
  <div className="pointer-events-none absolute right-[9px] bottom-[6px] z-30 flex items-center gap-[2px]">
    <svg width="43" height="42" viewBox="0 0 43 42" aria-hidden="true">
      <defs>
        <linearGradient id="swirl-blue" x1="1" y1="0" x2="0" y2="1">
          <stop offset="0" stopColor="#6fd0f2" />
          <stop offset="1" stopColor="#4377c8" />
        </linearGradient>
        <linearGradient id="swirl-green" x1="1" y1="0" x2="0" y2="1">
          <stop offset="0" stopColor="#4fc18a" />
          <stop offset="0.6" stopColor="#7ac943" />
          <stop offset="1" stopColor="#f4e04d" />
        </linearGradient>
      </defs>
      <path d="M43 1C24 0 4 8 1 22c-1 6 2 11 7 12-5-8 0-17 9-23 7-5 16-8 26-10z" fill="url(#swirl-blue)" />
      <path
        d="M20 17c10-5 22-1 21 7-1 10-16 17-32 16 12-2 22-8 23-15 1-6-5-9-12-8z"
        fill="url(#swirl-green)"
      />
      <path
        d="M25 22c-6-3-14 1-14 7 0 3 2 5 5 5 6 0 9-6 6-8-3-1-6 3-4 5"
        fill="none"
        stroke="#4f8fd8"
        strokeWidth="2"
      />
    </svg>
    <div>
      <div className="text-[21px] leading-[22px] font-bold text-[#5c97d8]">极光下载站</div>
      <div className="font-['Inter',sans-serif] text-base leading-[22px] font-semibold text-[#6cc08b]">
        www.xz7.com
      </div>
    </div>
  </div>
);

export default function App() {
  return (
    <div className="relative flex min-h-screen flex-col overflow-hidden bg-[#f5f7f9] font-['Noto_Sans','Noto_Sans_CJK_SC',sans-serif] text-xs leading-4">
      <TitleBar />
      <MenuRow />
      <Ribbon />
      <div className="relative flex flex-1">
        <VerticalRuler />
        <main className="flex flex-1 justify-center pl-2">
          <div>
            <HorizontalRuler />
            <div className="mt-[23px] flex gap-[14px] bg-[#d9dbdd] shadow-[0_10px_16px_2px_rgba(0,0,0,0.16)]">
              {pages.map((page) => (
                <Page key={page.number} number={page.number} lines={page.lines} />
              ))}
            </div>
          </div>
        </main>
        <ScrollColumn />
        <StylePane />
        <ToolStrip />
        <PrintDialog />
      </div>
      <StatusBar />
      <MeterBadge />
      <Watermark />
    </div>
  );
}
